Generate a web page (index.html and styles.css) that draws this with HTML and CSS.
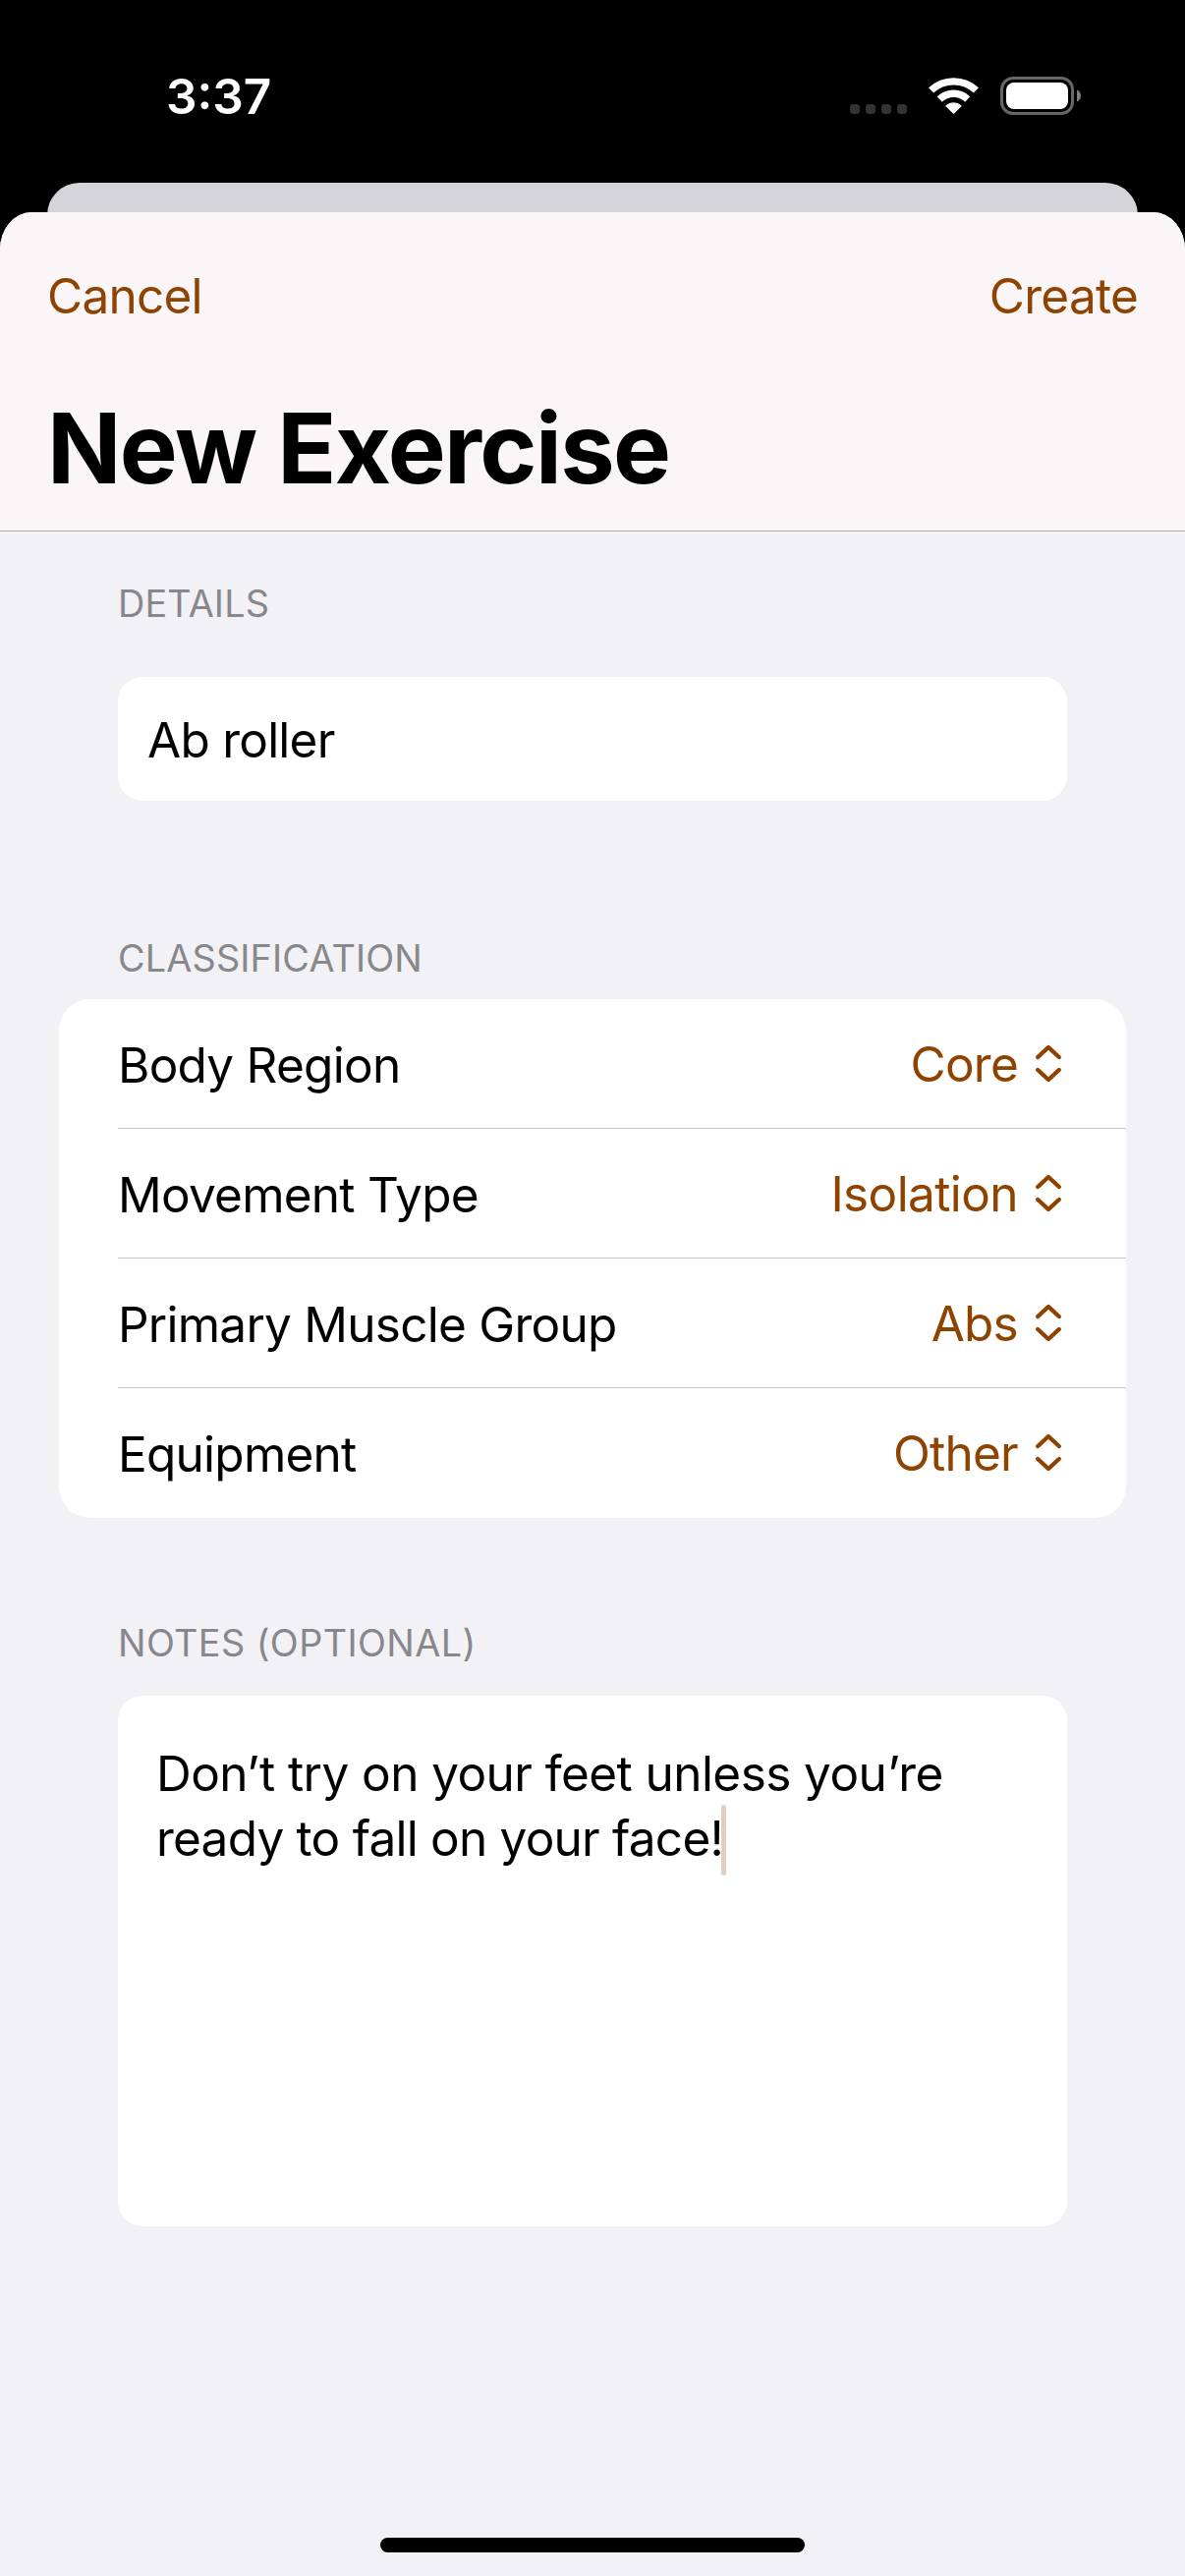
FILE: index.html
```html
<!DOCTYPE html>
<html lang="en">
<head>
<meta charset="utf-8">
<title>New Exercise</title>
<link rel="stylesheet" href="styles.css">
</head>
<body>
<svg class="symbols" aria-hidden="true">
  <symbol id="chevrons" viewBox="0 0 28 41">
    <path d="M3.2 14 14 4 24.8 14M3.2 27 14 37 24.8 27" fill="none" stroke="currentColor" stroke-width="4.4" stroke-linecap="round" stroke-linejoin="round"/>
  </symbol>
</svg>
<div class="screen">
  <div class="status-bar">
    <span class="time">3:37</span>
    <div class="status-icons">
      <div class="signal"><i></i><i></i><i></i><i></i></div>
      <svg width="53" height="39" viewBox="0 0 53 39">
        <g fill="none" stroke="#fff" stroke-width="7.3">
          <path d="M3.6 13.9A33.3 33.3 0 0 1 49.4 13.9"/>
          <path d="M12.2 23A20.7 20.7 0 0 1 40.8 23"/>
        </g>
        <path d="M19 29.8A11.2 11.2 0 0 1 34 29.8L26.5 37.2Z" fill="#fff" stroke="#fff" stroke-width="1.2" stroke-linejoin="round"/>
      </svg>
      <svg width="83" height="39" viewBox="0 0 83 39">
        <rect x="1.5" y="1.5" width="72" height="36" rx="11.5" fill="none" stroke="#666" stroke-width="3"/>
        <rect x="6" y="6" width="63" height="27" rx="8" fill="#fff"/>
        <path d="M78 13.5C83.3 15.6 83.3 23.4 78 25.5Z" fill="#808080"/>
      </svg>
    </div>
  </div>
  <div class="back-sheet"></div>
  <main class="sheet">
    <header class="header">
      <nav class="actions">
        <a class="cancel">Cancel</a>
        <a class="create">Create</a>
      </nav>
      <h1 class="title">New Exercise</h1>
    </header>

    <h2 class="label label-details">Details</h2>
    <div class="field">Ab roller</div>

    <h2 class="label label-class">Classification</h2>
    <div class="list">
      <div class="row"><span class="name">Body Region</span><span class="value">Core</span><svg class="chev"><use href="#chevrons"/></svg></div>
      <div class="row"><span class="name">Movement Type</span><span class="value wide">Isolation</span><svg class="chev"><use href="#chevrons"/></svg></div>
      <div class="row"><span class="name">Primary Muscle Group</span><span class="value">Abs</span><svg class="chev"><use href="#chevrons"/></svg></div>
      <div class="row"><span class="name">Equipment</span><span class="value">Other</span><svg class="chev"><use href="#chevrons"/></svg></div>
    </div>

    <h2 class="label label-notes">Notes (Optional)</h2>
    <div class="notes">
      <div class="line-one">Don’t try on your feet unless you’re</div>
      <div class="line-two">ready to fall on your face!<span class="caret"></span></div>
    </div>
    <div class="home-bar"></div>
  </main>
</div>
</body>
</html>
```
FILE: styles.css
```css
* { box-sizing: border-box; }

body {
  margin: 0;
  background: #000;
  font-family: Inter, "Liberation Sans", sans-serif;
  font-size: 49.5px;
  letter-spacing: -0.75px;
  color: #000;
}

.symbols { display: none; }

.screen {
  display: flex;
  flex-direction: column;
  width: 1206px;
  height: 2622px;
  overflow: hidden;
}

/* Status bar */
.status-bar {
  display: flex;
  justify-content: space-between;
  align-items: flex-start;
  flex: none;
  height: 186px;
  padding: 68px 105px 0 169px;
  color: #fff;
}
.time { font-weight: 600; line-height: 60px; letter-spacing: 0; }
.status-icons { display: flex; align-items: flex-end; gap: 21px; margin-top: 10px; }
.status-icons svg { display: block; }
.signal { display: flex; gap: 6px; margin-bottom: 1px; }
.signal i { width: 10px; height: 10px; border-radius: 3.5px; background: #333; }

/* Sheets */
.back-sheet {
  flex: none;
  height: 70px;
  margin: 0 48px -40px;
  border-radius: 33px 33px 0 0;
  background: #d5d4d9;
}
.sheet {
  position: relative;
  display: flex;
  flex-direction: column;
  flex: 1;
  overflow: hidden;
  border-radius: 32px 32px 0 0 / 38px 38px 0 0;
  background: #f2f1f6;
}

.header {
  padding: 52px 48px 24px;
  border-bottom: 1px solid #a9a8ab;
  background: #faf6f8;
}
.actions {
  display: flex;
  justify-content: space-between;
  line-height: 66px;
  color: #8f4300;
}
.title {
  margin: 62px 0 0;
  font-size: 99px;
  font-weight: 700;
  line-height: 120px;
  letter-spacing: -1.6px;
}

/* Form */
.label {
  margin: 0 120px;
  font-size: 37.8px;
  font-weight: 400;
  line-height: 48px;
  letter-spacing: 0.15px;
  text-transform: uppercase;
  color: #88878c;
}
.label-details { margin-top: 49px; }
.label-class { margin-top: 136px; }
.label-notes { margin-top: 103px; letter-spacing: 0.4px; }

.field {
  height: 126px;
  margin: 51px 120px 0;
  padding: 2px 30px 0;
  border-radius: 25px;
  background: #fff;
  line-height: 124px;
}

.list {
  margin: 18px 60px 0;
  padding-left: 60px;
  border-radius: 32px;
  background: #fff;
}
.row {
  display: flex;
  align-items: center;
  height: 132px;
  padding-right: 65px;
  border-bottom: 1px solid #c6c6c8;
}
.row:last-child { border-color: transparent; }
.name { flex: 1; padding-top: 3px; line-height: 66px; }
.value { padding-top: 1px; line-height: 66px; color: #8f4300; }
.wide { letter-spacing: -0.6px; }
.chev { width: 28px; height: 41px; margin-left: 17px; color: #8f4300; }

.notes {
  height: 540px;
  margin: 30px 120px 0;
  padding: 46px 39px;
  border-radius: 25px;
  background: #fff;
  line-height: 66px;
}
.line-one { letter-spacing: -0.57px; }
.line-two { position: relative; width: max-content; letter-spacing: -0.77px; }
.caret {
  position: absolute;
  top: -1px;
  left: 575px;
  width: 5px;
  height: 72px;
  border-radius: 2.5px;
  background: #e3cfc0;
}

.home-bar {
  width: 432px;
  height: 15px;
  margin: auto auto 24px;
  border-radius: 8px;
  background: #000;
}
```
